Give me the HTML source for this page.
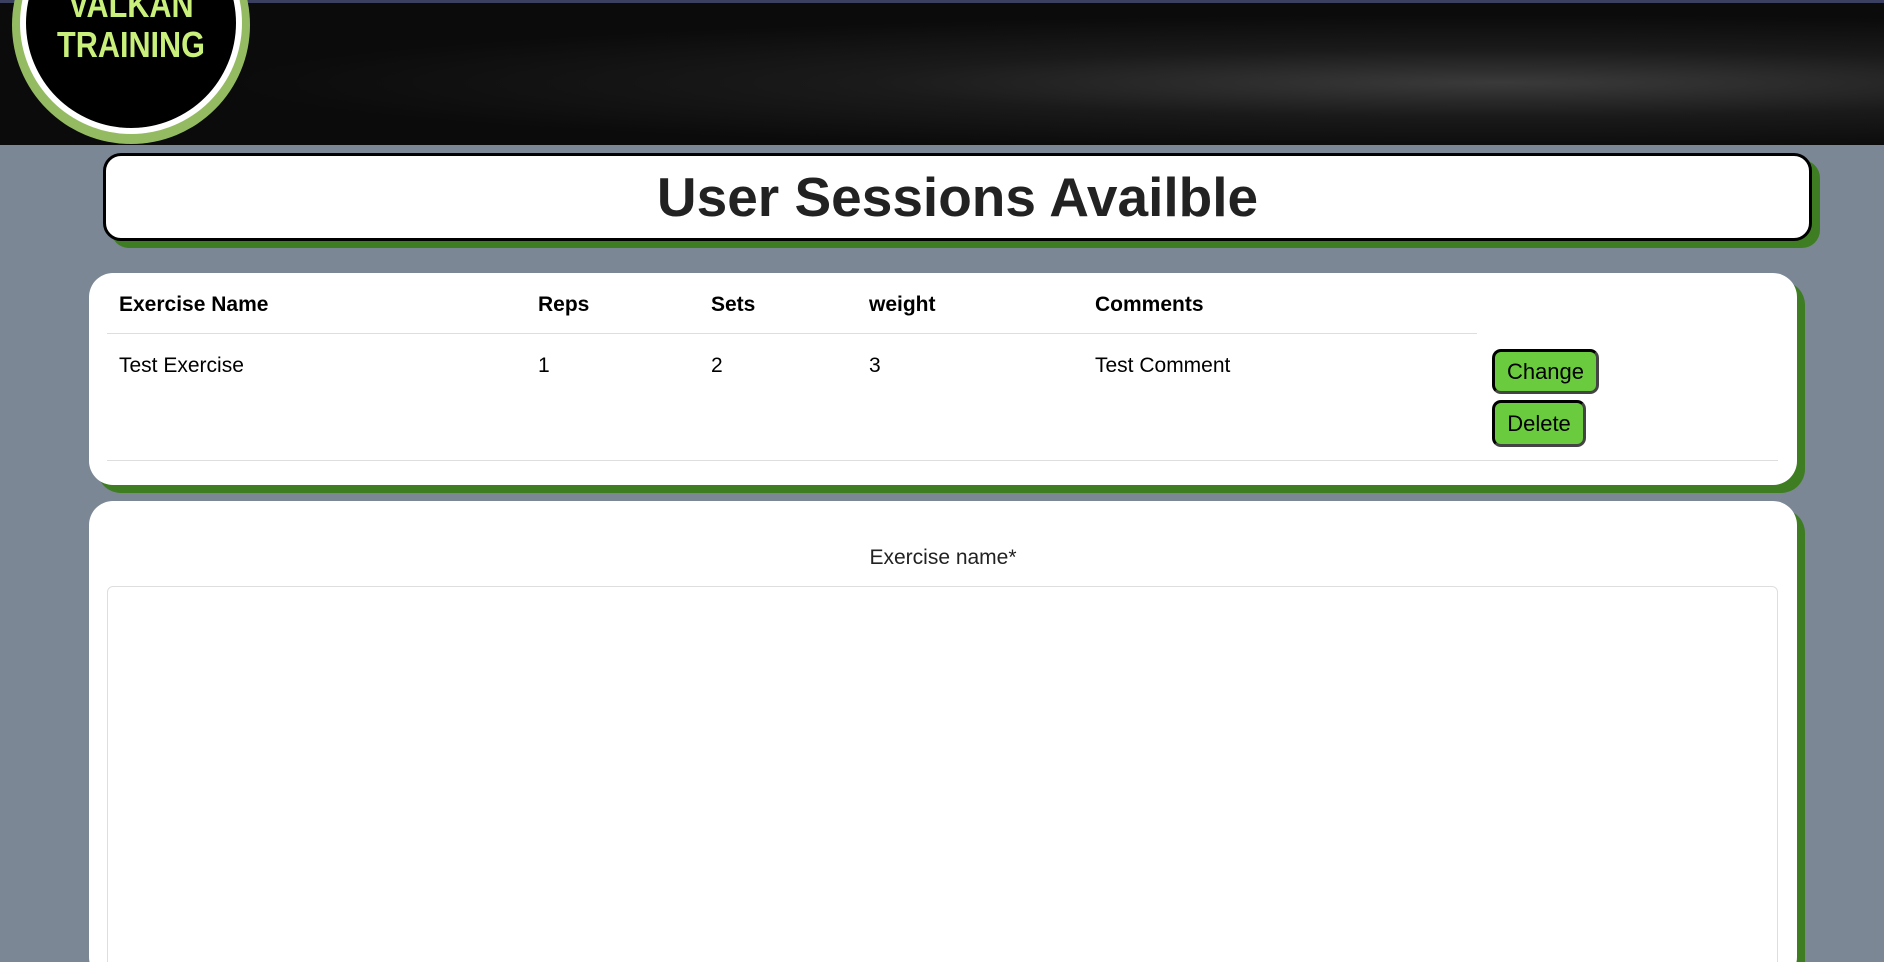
<!DOCTYPE html>
<html style="width:1884px;height:962px;overflow:hidden"><head><meta charset="utf-8"><style>
*{box-sizing:border-box;margin:0;padding:0}
body{width:1884px;height:962px;overflow:hidden;background:#7b8795;font-family:"Liberation Sans",sans-serif;position:relative}
.hdr{position:absolute;left:0;top:0;width:1884px;height:145px;background:radial-gradient(ellipse at 1500px 80px,#3a3a3a 0,#1a1a1a 30%,#0b0b0b 60%);border-top:3px solid #3c4060}
.logo{position:absolute;left:12px;top:-94px;width:238px;height:238px;border-radius:50%;background:#95bb62;}
.logo .w{position:absolute;left:8px;top:6px;width:222px;height:222px;border-radius:50%;background:#fff}
.logo .b{position:absolute;left:14px;top:12px;width:210px;height:210px;border-radius:50%;background:#000}
.logo span{position:absolute;left:0;width:100%;text-align:center;color:#c9f07a;font:bold 36px "Liberation Sans Narrow","Liberation Sans",sans-serif;transform:scaleX(.85)}
.title{position:absolute;left:103px;top:153px;width:1709px;height:88px;background:#fff;border:3px solid #000;border-radius:18px;box-shadow:8px 7px 0 #3f7d22;text-align:center;font-size:55px;font-weight:bold;color:#222;line-height:82px}
.card{position:absolute;left:89px;width:1708px;background:#fff;border-radius:24px;box-shadow:8px 8px 0 #3f7d22;overflow:hidden}
.t{position:absolute;font-size:21px;color:#000}
.b{font-weight:bold}
.line{position:absolute;height:1px;background:#dedede}
.btn{position:absolute;left:1403px;background:#6bcb3e;border:3px solid #000;border-right-color:#444;border-bottom-color:#444;border-radius:9px;font-size:22px;text-align:center}
</style></head><body>
<div class="hdr"></div>
<div class="logo"><div class="w"></div><div class="b"></div><span style="top:78px">VALKAN</span><span style="top:118px">TRAINING</span></div>
<div class="title">User Sessions Availble</div>
<div class="card" style="top:273px;height:212px">
<div class="t b" style="left:30px;top:20px">Exercise Name</div>
<div class="t b" style="left:449px;top:20px">Reps</div>
<div class="t b" style="left:622px;top:20px">Sets</div>
<div class="t b" style="left:780px;top:20px">weight</div>
<div class="t b" style="left:1006px;top:20px">Comments</div>
<div class="line" style="left:18px;top:60px;width:1370px"></div>
<div class="t" style="left:30px;top:81px">Test Exercise</div>
<div class="t" style="left:449px;top:81px">1</div>
<div class="t" style="left:622px;top:81px">2</div>
<div class="t" style="left:780px;top:81px">3</div>
<div class="t" style="left:1006px;top:81px">Test Comment</div>
<div class="btn" style="top:76px;width:107px;height:45px;line-height:40px">Change</div>
<div class="btn" style="top:127px;width:94px;height:47px;line-height:42px">Delete</div>
<div class="line" style="left:18px;top:187px;width:1671px"></div>
</div>
<div class="card" style="top:501px;height:480px">
<div class="t" style="left:0;width:100%;text-align:center;top:45px;color:#222">Exercise name*</div>
<div style="position:absolute;left:18px;top:85px;width:1671px;height:420px;border:1px solid #dedede;border-radius:6px"></div>
</div>
</body></html>
